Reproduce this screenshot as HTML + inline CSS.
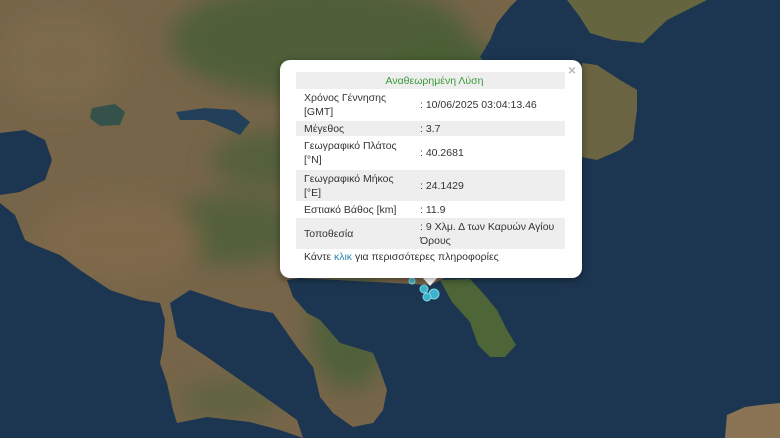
<!DOCTYPE html>
<html><head><meta charset="utf-8"><style>
html,body{margin:0;padding:0;width:780px;height:438px;overflow:hidden;background:#1c3651}
#map{position:absolute;left:0;top:0}
.pop{position:absolute;left:280px;top:60px;width:302px;height:218px;background:#fff;border-radius:10px;box-shadow:0 2px 8px rgba(0,0,0,.4);font-family:"Liberation Sans",Arial,sans-serif;font-size:10.5px;color:#333}
.tip{position:absolute;left:422px;top:277px;width:0;height:0;border-left:8px solid transparent;border-right:8px solid transparent;border-top:9px solid #fff}
.x{position:absolute;right:6px;top:2px;color:#bbb;font-size:14px;font-weight:bold}
table{position:absolute;left:16px;top:12px;width:269px;border-collapse:collapse}
td{padding:0 0 0 8px;vertical-align:middle;line-height:14px}
tr.g{background:#eeeeee}
td.v{padding-left:4px}
.h{text-align:center;color:#3a9a3a;height:17px}
.more{position:absolute;left:24px;top:191px}
.more span{color:#2a8ab0}
</style></head><body>
<svg id="map" width="780" height="438" viewBox="0 0 780 438">
<defs>
<filter id="b" x="-20%" y="-20%" width="140%" height="140%"><feGaussianBlur stdDeviation="12"/></filter>
<clipPath id="land"><path id="lp" d="M0 0 L517 0 L510 7 L497 23 L490 40 L480 57 L500 80 L560 100 L580 180 L560 275 L445 278 L430 285 L300 278 L287 280 L293 297 L307 313 L320 320 L340 343 L373 353 L380 370 L387 390 L383 410 L373 423 L353 427 L333 413 L320 397 L313 367 L297 347 L283 327 L273 313 L240 307 L190 290 L170 303 L177 337 L207 357 L240 380 L273 403 L297 420 L303 438 L280 430 L250 422 L207 417 L177 423 L173 410 L167 383 L160 363 L163 347 L165 320 L160 303 L140 300 L110 290 L80 270 L60 255 L35 245 L25 240 L15 215 L0 203 Z"/></clipPath>
</defs>
<rect width="780" height="438" fill="#1c3651"/>
<g clip-path="url(#land)">
<rect width="780" height="438" fill="#776549"/>
<g filter="url(#b)">
<ellipse cx="320" cy="40" rx="150" ry="60" fill="#4f5e37"/>
<ellipse cx="450" cy="120" rx="90" ry="80" fill="#4a5e34"/>
<ellipse cx="280" cy="160" rx="70" ry="30" fill="#55603a"/>
<ellipse cx="230" cy="230" rx="70" ry="35" fill="#52603a"/>
<ellipse cx="350" cy="330" rx="40" ry="60" fill="#50603a"/>
<ellipse cx="60" cy="60" rx="60" ry="50" fill="#7d6a4e"/>
<ellipse cx="120" cy="240" rx="80" ry="40" fill="#80694c"/>
<ellipse cx="230" cy="400" rx="50" ry="20" fill="#5f6340"/>
</g>
</g>
<path d="M0 133 L25 130 L45 140 L52 160 L45 180 L20 192 L0 195 Z" fill="#1c3651"/>
<path d="M92 108 L115 104 L125 112 L120 125 L100 126 L90 118 Z" fill="#34524a"/>
<path d="M176 112 L205 108 L235 110 L250 122 L240 135 L225 128 L205 120 L180 120 Z" fill="#22405a"/>
<path d="M440 280 L470 279 L482 292 L497 310 L507 330 L516 345 L505 357 L490 357 L478 345 L470 322 L452 302 Z" fill="#4d6537"/>
<path d="M567 0 L707 0 L667 20 L643 43 L613 40 L590 33 L580 17 Z" fill="#65663f"/>
<path d="M582 63 L597 65 L620 80 L637 90 L637 110 L633 140 L620 150 L597 160 L582 157 Z" fill="#6a6442"/>
<path d="M725 438 L727 415 L745 407 L760 405 L780 403 L780 438 Z" fill="#8a7455"/>
<g fill="#3fc0dc" stroke="#8ee4f2" stroke-width="1" opacity="0.9">
<circle cx="412" cy="281" r="3"/><circle cx="424" cy="289" r="4"/><circle cx="434" cy="294" r="5"/><circle cx="427" cy="297" r="4"/>
</g>
</svg>
<div class="tip"></div>
<div class="pop">
<div class="x">×</div>
<table>
<tr class="g"><td colspan="2" class="h">Αναθεωρημένη Λύση</td></tr>
<tr style="height:32px"><td style="width:112px">Χρόνος Γέννησης<br>[GMT]</td><td class="v">: 10/06/2025 03:04:13.46</td></tr>
<tr class="g" style="height:15px"><td>Μέγεθος</td><td class="v">: 3.7</td></tr>
<tr style="height:34px"><td>Γεωγραφικό Πλάτος<br>[°N]</td><td class="v">: 40.2681</td></tr>
<tr class="g" style="height:31px"><td>Γεωγραφικό Μήκος<br>[°E]</td><td class="v">: 24.1429</td></tr>
<tr style="height:17px"><td>Εστιακό Βάθος [km]</td><td class="v">: 11.9</td></tr>
<tr class="g" style="height:31px"><td>Τοποθεσία</td><td class="v">: 9 Χλμ. Δ των Καρυών Αγίου<br>Όρους</td></tr>
</table>
<div class="more">Κάντε <span>κλικ</span> για περισσότερες πληροφορίες</div>
</div>
</body></html>
